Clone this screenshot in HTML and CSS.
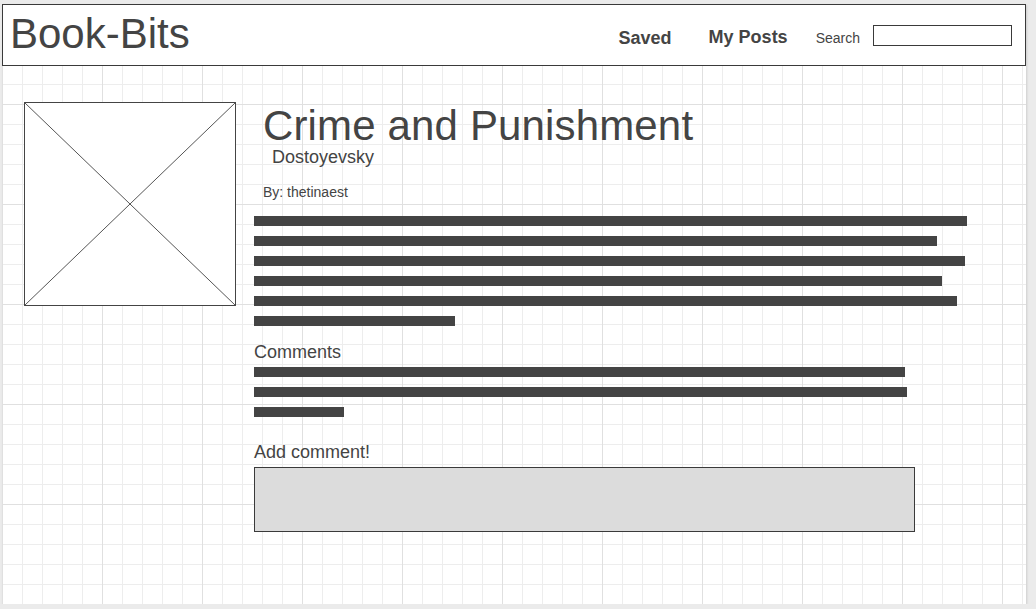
FILE: index.html
```html
<!DOCTYPE html>
<html>
  <head>
    <title>Book-Bits</title>
    <meta name="viewport" content="width=device-width, initial-scale=1.0" />
    <link rel="stylesheet" href="styles.css">
  </head>
  <body>
    <div class="canvas">
      <header class="topbar">
        <div class="logo">Book-Bits</div>
        <nav class="nav">
          <a class="nav-link saved">Saved</a>
          <a class="nav-link posts">My Posts</a>
          <label class="search-label">Search</label>
          <input class="search-box" type="text" />
        </nav>
      </header>
      <main class="post">
        <div class="cover">
          <svg width="212" height="204" viewBox="0 0 212 204">
            <rect x="0.5" y="0.5" width="211" height="203" fill="#fff" stroke="#444" />
            <line x1="0.5" y1="0.5" x2="211.5" y2="203.5" stroke="#555" />
            <line x1="211.5" y1="0.5" x2="0.5" y2="203.5" stroke="#555" />
          </svg>
        </div>
        <div class="details">
          <h1 class="title">Crime and Punishment</h1>
          <div class="author">Dostoyevsky</div>
          <div class="byline">By: thetinaest</div>
          <div class="lines">
            <div class="line" style="width: 713px"></div>
            <div class="line" style="width: 683px"></div>
            <div class="line" style="width: 711px"></div>
            <div class="line" style="width: 688px"></div>
            <div class="line" style="width: 703px"></div>
            <div class="line" style="width: 201px"></div>
          </div>
          <h2 class="section">Comments</h2>
          <div class="lines comment-lines">
            <div class="line" style="width: 651px"></div>
            <div class="line" style="width: 653px"></div>
            <div class="line" style="width: 90px"></div>
          </div>
          <h2 class="section add">Add comment!</h2>
          <div class="comment-box"></div>
        </div>
      </main>
    </div>
  </body>
</html>
```

FILE: styles.css
```css
body {
  margin: 0;
  background: #ebebeb;
  font-family: "Liberation Sans", Arial, sans-serif;
  color: #444;
}
.canvas {
  box-sizing: border-box;
  width: 1024px;
  height: 600px;
  margin: 4px 0 0 2px;
  background-color: #fff;
  background-image:
    linear-gradient(to right, #e0e0e0 1px, transparent 1px),
    linear-gradient(to bottom, #e0e0e0 1px, transparent 1px),
    linear-gradient(to right, #ededed 1px, transparent 1px),
    linear-gradient(to bottom, #ededed 1px, transparent 1px);
  background-size: 100px 100px, 100px 100px, 20px 20px, 20px 20px;
  box-shadow: 1px 1px 2px rgba(0, 0, 0, 0.12);
}
.topbar {
  box-sizing: border-box;
  height: 62px;
  border: 1px solid #3a3a3a;
  background: #fff;
  display: flex;
  align-items: flex-start;
  padding: 0 13px 0 7px;
}
.logo {
  font-size: 42px;
  line-height: 46px;
  margin-top: 6px;
}
.nav {
  margin-left: auto;
  display: flex;
  align-items: flex-start;
}
.nav-link {
  font-weight: bold;
  font-size: 18px;
  line-height: 20px;
}
.saved {
  margin-top: 23px;
  margin-right: 37px;
}
.posts {
  margin-top: 22px;
  margin-right: 28px;
}
.search-label {
  font-size: 14px;
  line-height: 16px;
  margin-top: 25px;
  margin-right: 13px;
}
.search-box {
  box-sizing: border-box;
  width: 139px;
  height: 21px;
  margin: 20px 0 0;
  border: 1px solid #3a3a3a;
  background: #fff;
  padding: 0;
}
.post {
  display: flex;
  align-items: flex-start;
  padding: 36px 0 0 22px;
}
.cover svg {
  display: block;
}
.details {
  margin-left: 18px;
  padding-top: 3px;
}
.title {
  margin: 0 0 0 9px;
  font-weight: normal;
  font-size: 42px;
  line-height: 42px;
  letter-spacing: 0.15px;
}
.author {
  margin: 0 0 0 18px;
  font-size: 18px;
  line-height: 20px;
}
.byline {
  margin: 17px 0 0 9px;
  font-size: 14px;
  line-height: 16px;
}
.lines {
  margin-top: 16px;
  display: flex;
  flex-direction: column;
  gap: 10px;
}
.line {
  height: 10px;
  background: #444;
}
.section {
  margin: 16px 0 0;
  font-weight: normal;
  font-size: 18px;
  line-height: 20px;
}
.comment-lines {
  margin-top: 5px;
}
.section.add {
  margin-top: 25px;
}
.comment-box {
  box-sizing: border-box;
  margin-top: 5px;
  width: 661px;
  height: 65px;
  background: #dcdcdc;
  border: 1px solid #3a3a3a;
}
```
